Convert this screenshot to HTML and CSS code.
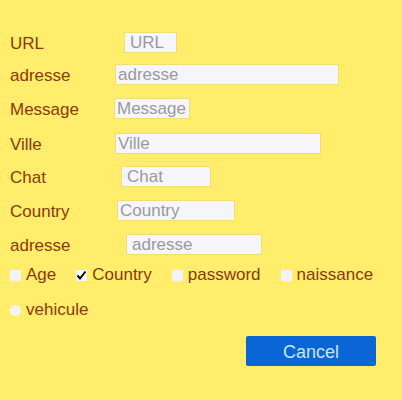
FILE: index.html
```html
<!DOCTYPE html>
<html>
<head>
<meta charset="utf-8">
<link rel="stylesheet" href="styles.css">
</head>
<body>
<form class="form">
  <div class="row r-url"><label class="lbl">URL</label><input class="field w-url" placeholder="URL"></div>
  <div class="row r-adr"><label class="lbl">adresse</label><input class="field w-adr" placeholder="adresse"></div>
  <div class="row r-msg"><label class="lbl">Message</label><input class="field w-msg" placeholder="Message"></div>
  <div class="row r-ville"><label class="lbl">Ville</label><input class="field w-ville" placeholder="Ville"></div>
  <div class="row r-chat"><label class="lbl">Chat</label><input class="field w-chat" placeholder="Chat"></div>
  <div class="row r-country"><label class="lbl">Country</label><input class="field w-country" placeholder="Country"></div>
  <div class="row r-adr2"><label class="lbl">adresse</label><input class="field w-adr2" placeholder="adresse"></div>
  <div class="checks">
    <label class="check"><span class="box"></span>Age</label>
    <label class="check"><span class="box checked"><svg width="11" height="11" viewBox="0 0 11 11"><path d="M1.5 5.5 L4 8.5 L9.5 1.5" fill="none" stroke="#000" stroke-width="2"/></svg></span>Country</label>
    <label class="check"><span class="box"></span>password</label>
    <label class="check"><span class="box"></span>naissance</label>
  </div>
  <div class="radios">
    <label class="check"><span class="dot"></span>vehicule</label>
  </div>
  <div class="actions">
    <button type="button" class="btn">Cancel</button>
  </div>
</form>
</body>
</html>
```
FILE: styles.css
```css
html, body {
  margin: 0;
  padding: 0;
  background: #ffed6b;
}
body {
  font-family: "Liberation Sans", Arial, sans-serif;
  font-size: 17px;
  color: #8a3a0c;
  width: 402px;
  height: 400px;
}
.form {
  padding: 32px 0 0 10px;
  display: flex;
  flex-direction: column;
}
.row {
  display: flex;
  align-items: center;
  height: 21px;
}
.lbl {
  width: 100px;
  flex: none;
  position: relative;
  top: 1px;
}
.field {
  box-sizing: border-box;
  height: 21px;
  border: 1px solid #f0dc78;
  background: #f6f5f9;
  font-family: "Liberation Sans", Arial, sans-serif;
  font-size: 17px;
  padding: 0 2px;
  margin: 0;
  outline: none;
  color: #555;
}
.field::placeholder { color: #9a9a9e; }
.r-adr { margin-top: 11px; }
.r-msg { margin-top: 13px; }
.r-ville { margin-top: 14px; }
.r-chat { margin-top: 12px; }
.r-country { margin-top: 13px; }
.r-adr2 { margin-top: 13px; }
.w-url { width: 53px; margin-left: 14px; padding-left: 5px; }
.w-adr { width: 224px; margin-left: 5px; }
.w-msg { width: 76px; margin-left: 4px; }
.w-ville { width: 206px; margin-left: 5px; }
.w-chat { width: 90px; margin-left: 11px; padding-left: 5px; }
.w-country { width: 118px; margin-left: 7px; }
.w-adr2 { width: 136px; margin-left: 16px; padding-left: 5px; }
.checks {
  display: flex;
  gap: 20px;
  margin-top: 10px;
  height: 20px;
  align-items: center;
}
.check {
  display: flex;
  align-items: center;
}
.box {
  width: 11px;
  height: 11px;
  background: #f4f4f7;
  margin-right: 5px;
  display: flex;
  align-items: center;
  justify-content: center;
}
.box.checked { background: #fbfbfc; }
.radios {
  margin-top: 15px;
  height: 20px;
  display: flex;
  align-items: center;
}
.dot {
  width: 11px;
  height: 11px;
  border-radius: 50%;
  background: #f4f4f7;
  margin-right: 5px;
}
.actions {
  display: flex;
  justify-content: flex-end;
  padding-right: 26px;
  margin-top: 16px;
}
.btn {
  width: 130px;
  height: 30px;
  background: #0a65d5;
  color: #c7e6ff;
  border: none;
  border-radius: 2px;
  font-family: "Liberation Sans", Arial, sans-serif;
  font-size: 18px;
  padding: 2px 0 0;
}
```
